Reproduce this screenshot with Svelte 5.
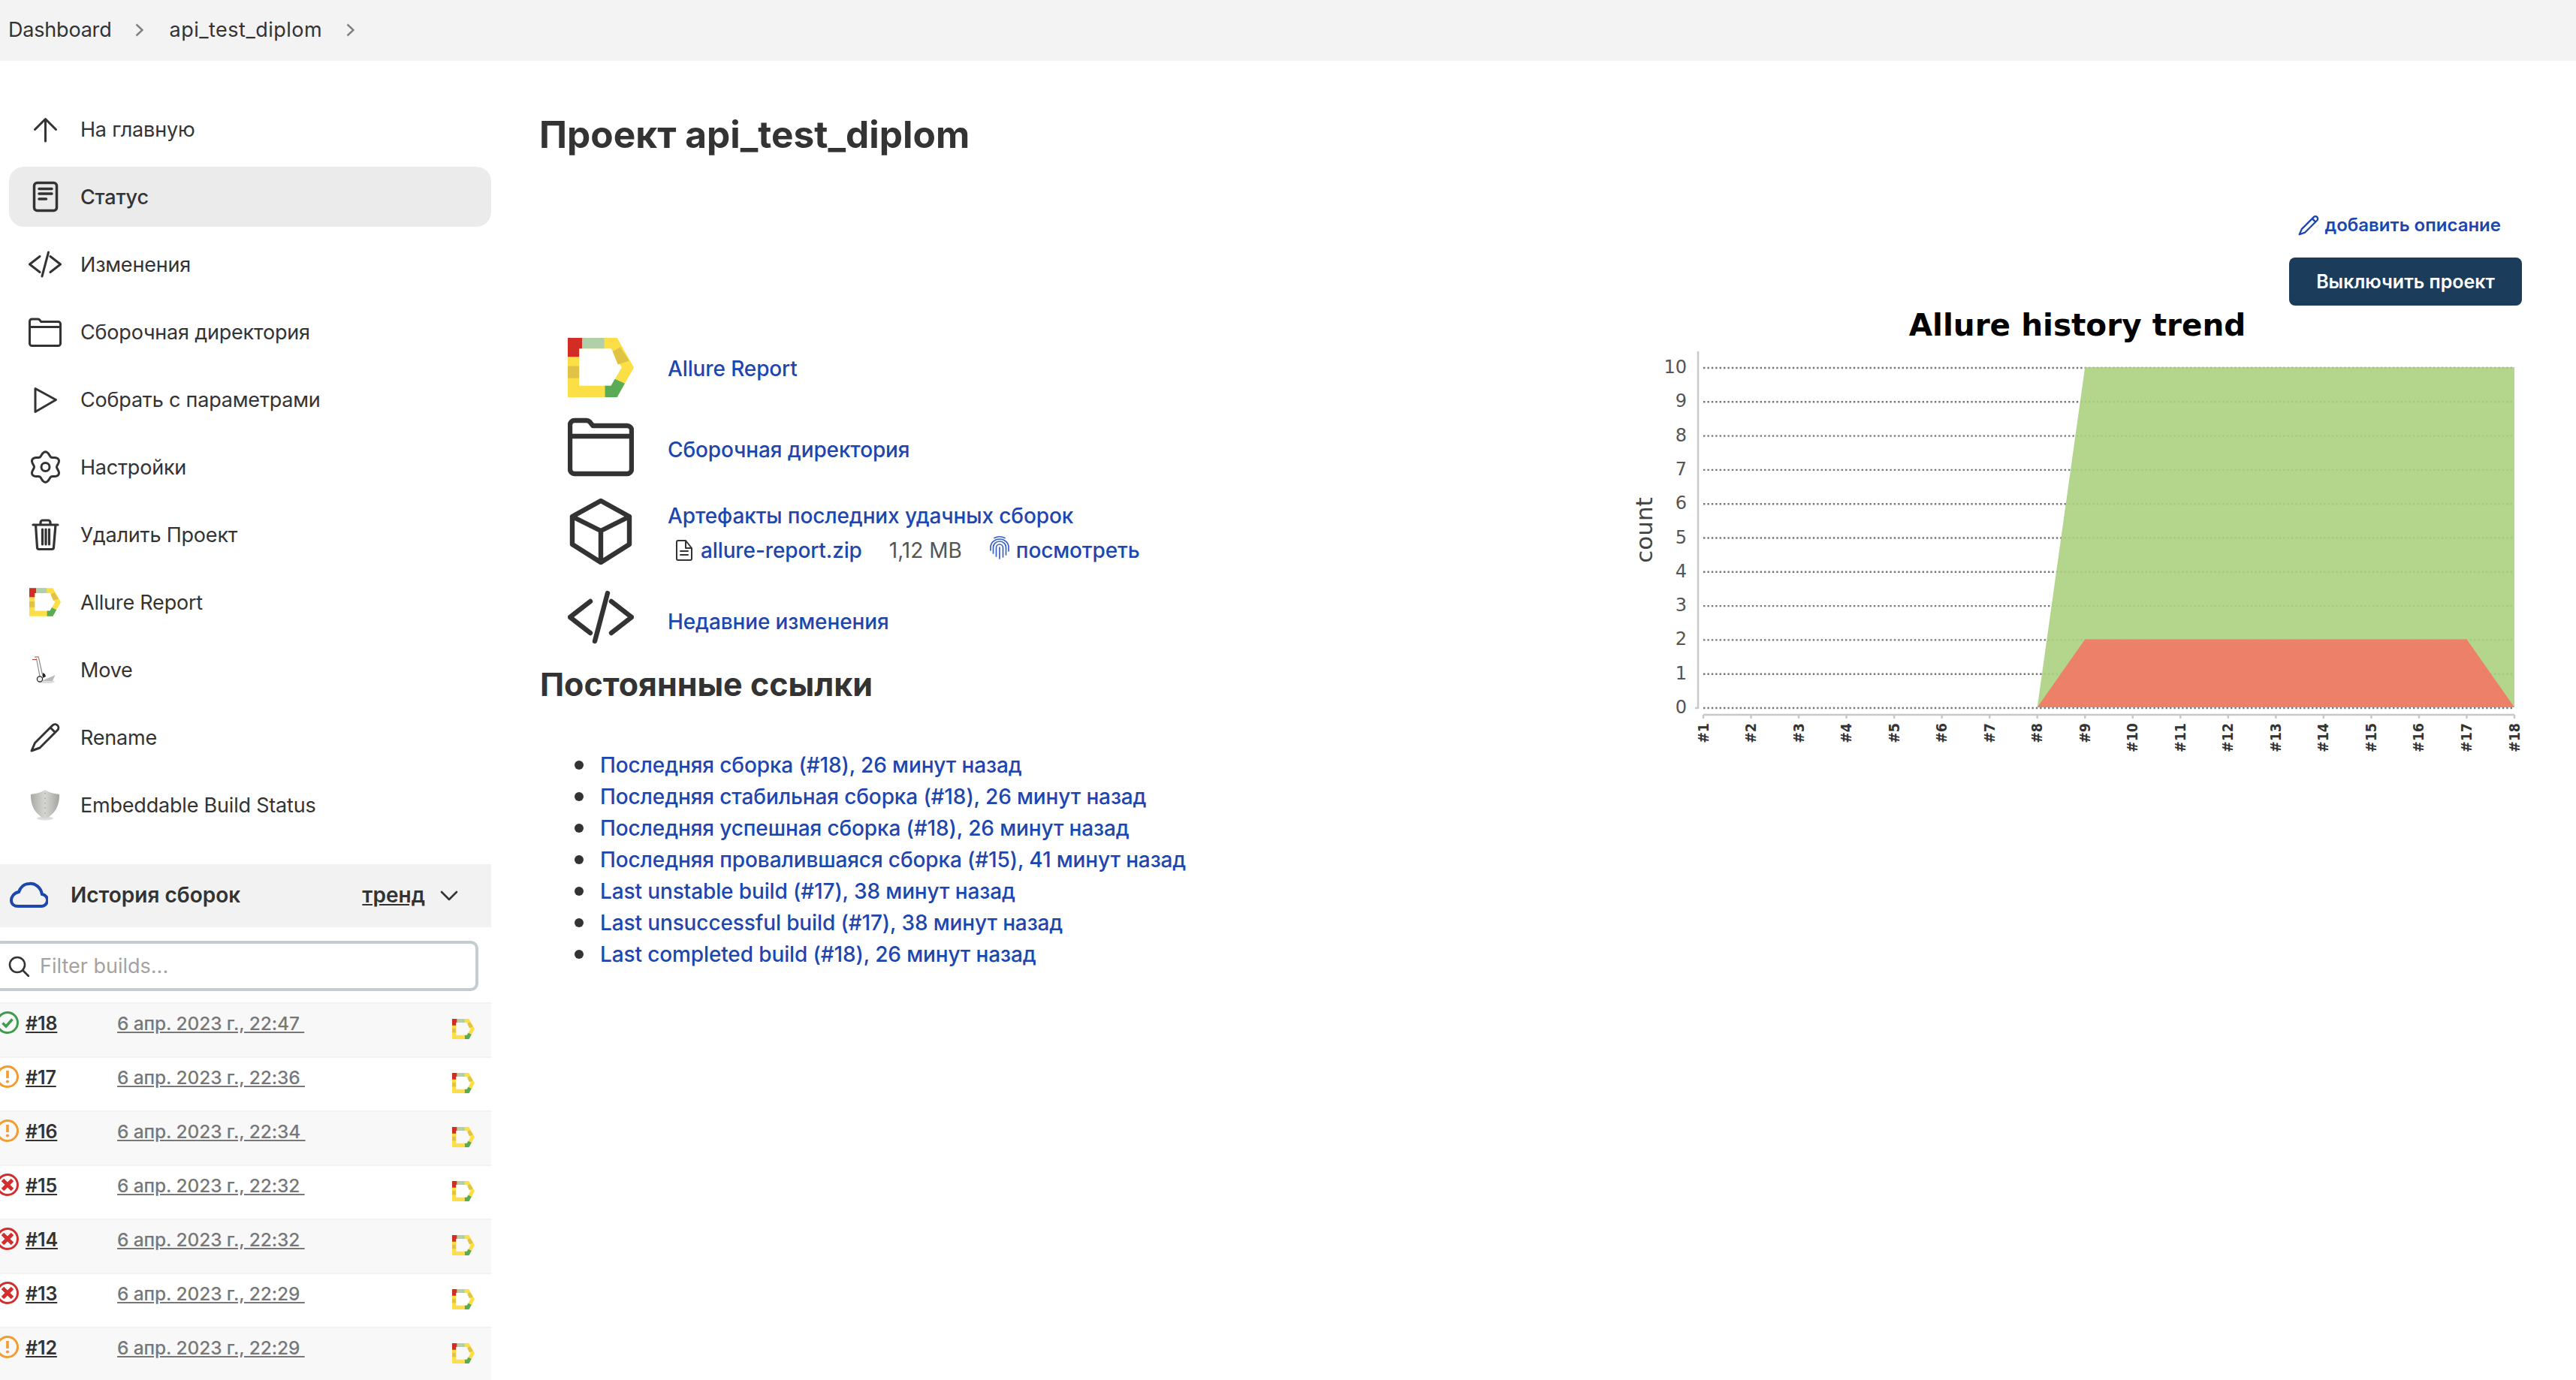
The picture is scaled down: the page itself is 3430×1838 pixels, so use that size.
<script>
	const navItems = [
		{ label: 'На главную', icon: 'up' },
		{ label: 'Статус', icon: 'status', active: true },
		{ label: 'Изменения', icon: 'code' },
		{ label: 'Сборочная директория', icon: 'folder' },
		{ label: 'Собрать с параметрами', icon: 'play' },
		{ label: 'Настройки', icon: 'gear' },
		{ label: 'Удалить Проект', icon: 'trash' },
		{ label: 'Allure Report', icon: 'allure' },
		{ label: 'Move', icon: 'move' },
		{ label: 'Rename', icon: 'pencil' },
		{ label: 'Embeddable Build Status', icon: 'shield' }
	];

	const builds = [
		{ id: 18, date: '6 апр. 2023 г., 22:47', status: 'ok' },
		{ id: 17, date: '6 апр. 2023 г., 22:36', status: 'warn' },
		{ id: 16, date: '6 апр. 2023 г., 22:34', status: 'warn' },
		{ id: 15, date: '6 апр. 2023 г., 22:32', status: 'fail' },
		{ id: 14, date: '6 апр. 2023 г., 22:32', status: 'fail' },
		{ id: 13, date: '6 апр. 2023 г., 22:29', status: 'fail' },
		{ id: 12, date: '6 апр. 2023 г., 22:29', status: 'warn' }
	];

	const permalinks = [
		'Последняя сборка (#18), 26 минут назад',
		'Последняя стабильная сборка (#18), 26 минут назад',
		'Последняя успешная сборка (#18), 26 минут назад',
		'Последняя провалившаяся сборка (#15), 41 минут назад',
		'Last unstable build (#17), 38 минут назад',
		'Last unsuccessful build (#17), 38 минут назад',
		'Last completed build (#18), 26 минут назад'
	];

	// chart geometry, in page pixels
	const xAt = (n) => 2268 + (n - 1) * (1080 / 17);
	const yAt = (v) => 942 - v * 45.3;
	const buildNums = Array.from({ length: 18 }, (_, i) => i + 1);
	const counts = Array.from({ length: 11 }, (_, i) => i);

	const greenArea = `${xAt(8)},${yAt(0)} ${xAt(9)},${yAt(10)} ${xAt(18)},${yAt(10)} ${xAt(18)},${yAt(0)}`;
	const redArea = `${xAt(8)},${yAt(0)} ${xAt(9)},${yAt(2)} ${xAt(17)},${yAt(2)} ${xAt(18)},${yAt(0)}`;

	// six lobed gear outline
	const gearPath = Array.from({ length: 96 }, (_, i) => {
		const a = (i / 96) * Math.PI * 2;
		const r = 17.6 - 2.6 * Math.cos(a * 6);
		return `${i ? 'L' : 'M'}${(22.5 + r * Math.cos(a)).toFixed(2)} ${(22 + r * Math.sin(a)).toFixed(2)}`;
	}).join(' ') + 'Z';
</script>

{#snippet allureLogo(w, h)}
	<svg width={w} height={h} viewBox="26 20 87 78">
		<path fill="#fcdf46" fill-rule="evenodd" d="M26 20H91L113 59L91 98H26ZM41 34V83H83L97 59L83 34Z" />
		<path fill="#d32c25" d="M26 20H45V34H41V45H26Z" />
		<path fill="#afd0a8" d="M45 20H74V34H45Z" />
		<path fill="#e0c344" d="M26 57H41V73H26Z" />
		<path fill="#e0c344" d="M95 32L107 50L92 55L85 38Z" />
		<path fill="#59ab56" d="M88 74L101 80L91 98H75V83H83Z" />
	</svg>
{/snippet}

{#snippet folderIcon(size, stroke)}
	<svg class="line" width={size} height={size} viewBox="0 0 44 44" stroke-width={stroke}>
		<path d="M1.5 8a3 3 0 0 1 3-3h8a3 3 0 0 1 2 .8l2.2 2.7h22.8a3 3 0 0 1 3 3v26a3 3 0 0 1-3 3h-35a3 3 0 0 1-3-3zM1.5 15.5h41" />
	</svg>
{/snippet}

{#snippet codeIcon(size, stroke)}
	<svg class="line" width={size} height={size} viewBox="0 0 44 44" stroke-width={stroke}>
		<path d="M15 11.5L1.5 22L15 32.5M29 11.5L42.5 22L29 32.5M26.5 6L18 38" />
	</svg>
{/snippet}

{#snippet navIcon(name)}
	{#if name === 'up'}
		<svg class="line" width="44" height="44" viewBox="0 0 44 44" stroke-width="3"><path d="M22.5 9V38M8.5 22.5L22.5 8.5L36.5 22.5" /></svg>
	{:else if name === 'status'}
		<svg class="line" width="44" height="44" viewBox="0 0 44 44" stroke-width="3.5">
			<rect x="7.5" y="3.5" width="30" height="37" rx="4" />
			<path d="M14 11.5H31M14 18H31M14 25H23.5" />
		</svg>
	{:else if name === 'code'}
		{@render codeIcon(44, 3)}
	{:else if name === 'folder'}
		{@render folderIcon(44, 3)}
	{:else if name === 'play'}
		<svg class="line" width="44" height="44" viewBox="0 0 44 44" stroke-width="3"><path d="M9 7.5L36.5 22.5L9 38.5Z" /></svg>
	{:else if name === 'gear'}
		<svg class="line" width="44" height="44" viewBox="0 0 44 44" stroke-width="3">
			<path d={gearPath} />
			<circle cx="22.5" cy="22" r="5.5" />
		</svg>
	{:else if name === 'trash'}
		<svg class="line" width="44" height="44" viewBox="0 0 44 44" stroke-width="3.2">
			<path d="M6 9H39M9.5 9L11.5 39a2.5 2.5 0 0 0 2.5 2.5h17a2.5 2.5 0 0 0 2.5-2.5L36 9M16 9V6a3 3 0 0 1 3-3h7a3 3 0 0 1 3 3V9M18.5 15V35M23 15V35M27.5 15V35" />
		</svg>
	{:else if name === 'allure'}
		<span class="nav-logo">{@render allureLogo(42, 38)}</span>
	{:else if name === 'move'}
		<svg width="44" height="44" viewBox="0 0 44 44">
			<ellipse cx="24" cy="38" rx="11" ry="2" fill="#ddd" />
			<path d="M10.5 7L15.5 33M13.5 6L19 31" stroke="#8d8d8d" stroke-width="1.2" fill="none" />
			<path d="M8 5H14M5 8.5H10.5" stroke="#b33" stroke-width="1.2" />
			<path d="M17 37L35.5 29L32 37Z" fill="#bbbcb8" />
			<path d="M19 26l3 2 1 3-4 2z" fill="#222" />
			<circle cx="15" cy="34.5" r="3.6" fill="#eee" stroke="#222" stroke-width="1.2" />
		</svg>
	{:else if name === 'pencil'}
		<svg class="line" width="44" height="44" viewBox="0 0 44 44" stroke-width="3">
			<path d="M4 40L8.5 29.5L32 6a4.5 4.5 0 0 1 6.5 6.5L15 36ZM29 9L35.5 15.5" />
		</svg>
	{:else if name === 'shield'}
		<svg width="44" height="44" viewBox="0 0 44 44">
			<defs>
				<linearGradient id="shieldFill" x1="0" x2="1" y1="0" y2="0">
					<stop offset="0" stop-color="#a9aaa5" />
					<stop offset="0.5" stop-color="#d6d7d2" />
					<stop offset="1" stop-color="#a3a49f" />
				</linearGradient>
			</defs>
			<ellipse cx="22" cy="40" rx="11" ry="2.5" fill="#ddd" />
			<path fill="url(#shieldFill)" d="M22 2C26 5 33 7 41 8C41.5 22 36 34 22 41C8 34 2.5 22 3 8C11 7 18 5 22 2Z" />
			<path d="M22 6V37" stroke="#999" stroke-width="1.2" stroke-dasharray="1.5 5" />
		</svg>
	{/if}
{/snippet}

{#snippet statusIcon(status)}
	<svg class="status" width="32" height="32" viewBox="0 0 32 32">
		{#if status === 'ok'}
			<circle cx="16" cy="16" r="13.5" stroke="#3f9c4c" stroke-width="3" fill="none" />
			<path d="M9.5 16.5L14 21L22.5 11.5" stroke="#3f9c4c" stroke-width="3.6" fill="none" />
		{:else if status === 'warn'}
			<circle cx="16" cy="16" r="13.5" stroke="#f39c2f" stroke-width="3" fill="none" />
			<path d="M16 8V18" stroke="#f39c2f" stroke-width="3.6" fill="none" />
			<circle cx="16" cy="22.5" r="2.1" fill="#f39c2f" />
		{:else}
			<circle cx="16" cy="16" r="13.5" stroke="#d12f2f" stroke-width="3" fill="none" />
			<path d="M9.5 9.5L22.5 22.5M22.5 9.5L9.5 22.5" stroke="#d12f2f" stroke-width="5" fill="none" />
		{/if}
	</svg>
{/snippet}

<div class="page">
	<header class="crumbs">
		<span>Dashboard</span>
		<svg class="crumb-arrow" width="11" height="18" viewBox="0 0 11 18"><path d="M1.5 1.5L9.5 9L1.5 16.5" /></svg>
		<span class="crumb-job">api_test_diplom</span>
		<svg class="crumb-arrow" width="11" height="18" viewBox="0 0 11 18"><path d="M1.5 1.5L9.5 9L1.5 16.5" /></svg>
	</header>

	<div class="body">
		<aside class="sidebar">
			<nav class="nav">
				{#each navItems as item}
					<div class="nav-item" class:active={item.active}>
						<span class="nav-icon">{@render navIcon(item.icon)}</span>
						<span>{item.label}</span>
					</div>
				{/each}
			</nav>

			<div class="history-head">
				<svg class="cloud" width="52" height="36" viewBox="0 0 52 36">
					<path d="M12 33H42a8 8 0 0 0 2-16C42 7 34 2 27 3C20 3 15 8 13 14C7 15 3 20 3 25C3 30 7 33 12 33Z" />
				</svg>
				<span class="history-title">История сборок</span>
				<span class="trend">тренд</span>
				<svg class="line chevron" width="24" height="14" viewBox="0 0 24 14" stroke-width="2.6"><path d="M2 2L12 12L22 2" /></svg>
			</div>

			<div class="filter">
				<svg class="line" width="28" height="28" viewBox="0 0 28 28" stroke-width="2.6"><circle cx="12" cy="12" r="10" /><path d="M19.5 19.5L27 27" /></svg>
				<input type="text" placeholder="Filter builds..." />
			</div>

			<div class="builds">
				{#each builds as build}
					<div class="build">
						{@render statusIcon(build.status)}
						<a class="build-id" href="#b">#{build.id}</a>
						<a class="build-date" href="#b">{build.date}&nbsp;</a>
						<span class="build-logo">{@render allureLogo(30, 27)}</span>
					</div>
				{/each}
			</div>
		</aside>

		<main class="main">
			<h1>Проект api_test_diplom</h1>

			<div class="actions">
				<a class="add-desc" href="#d">
					<svg width="30" height="30" viewBox="0 0 44 44" class="blue-line" stroke-width="3.4">
						<path d="M4 40L8.5 29.5L32 6a4.5 4.5 0 0 1 6.5 6.5L15 36ZM29 9L35.5 15.5" />
					</svg>
					добавить описание
				</a>
				<button class="disable-btn">Выключить проект</button>
			</div>

			<div class="content">
				<div class="left">
					<div class="task">
						<span class="task-icon">{@render allureLogo(88, 79)}</span>
						<a href="#t">Allure Report</a>
					</div>
					<div class="task">
						<span class="task-icon">{@render folderIcon(88, 3.2)}</span>
						<a href="#t">Сборочная директория</a>
					</div>
					<div class="task">
						<span class="task-icon">
							<svg class="line" width="88" height="88" viewBox="0 0 88 88" stroke-width="6.4">
								<path d="M44 3L82 24V61L44 85L6 61V24ZM6 24L44 43L82 24M44 43V85" />
							</svg>
						</span>
						<div class="artifacts">
							<a href="#t">Артефакты последних удачных сборок</a>
							<div class="artifact-row">
								<svg class="line" width="24" height="28" viewBox="0 0 24 28" stroke-width="2">
									<path d="M2 3a2 2 0 0 1 2-2H14L22 11V25a2 2 0 0 1-2 2H4a2 2 0 0 1-2-2ZM14 1V11H22M7 15H17M7 20H17" />
								</svg>
								<a class="zip" href="#t">allure-report.zip</a>
								<span class="size">1,12 MB</span>
								<svg class="print" width="28" height="32" viewBox="0 0 28 32">
									<path d="M7 3.5Q14 0 21 3.5M2 20V16A12 11 0 0 1 26 16V21M5.5 24V16A8.5 8 0 0 1 22.5 16V26M9.5 28V16.5A4.5 4.5 0 0 1 18.5 16.5V29M14 16V31" />
								</svg>
								<a href="#t">посмотреть</a>
							</div>
						</div>
					</div>
					<div class="task">
						<span class="task-icon">{@render codeIcon(88, 3.2)}</span>
						<a href="#t">Недавние изменения</a>
					</div>

					<h2>Постоянные ссылки</h2>
					<ul class="permalinks">
						{#each permalinks as link}
							<li><a href="#p">{link}</a></li>
						{/each}
					</ul>
				</div>

				<svg class="chart" width="1188" height="600" viewBox="2170 410 1188 600">
					<text class="chart-title" x="2766" y="447" text-anchor="middle">Allure history trend</text>

					{#each counts as c}
						<line class="grid" x1="2268" x2="3348" y1={yAt(c) + 1} y2={yAt(c) + 1} />
						<text class="y-label" x="2246" y={yAt(c) + 8} text-anchor="end">{c}</text>
					{/each}

					<polygon points={greenArea} fill="#acd07f" fill-opacity="0.9" />
					<polygon points={redArea} fill="#ec8068" />

					<line class="axis" x1="2261" x2="2261" y1="468" y2="944" />
					<line class="axis" x1="2257" x2="2261" y1="943" y2="943" />
					<line class="axis" x1="2268" x2="3348" y1="952" y2="952" />

					{#each buildNums as n}
						<line class="axis" x1={xAt(n)} x2={xAt(n)} y1="952" y2="957" />
						<text class="x-label" text-anchor="end" transform="translate({xAt(n) + 6.5} 963) rotate(-90) scale(1 1.12)">#{n}</text>
					{/each}

					<text class="count" text-anchor="middle" transform="translate(2200 706) rotate(-90)">count</text>
				</svg>
			</div>
		</main>
	</div>
</div>

<style>
	:global(body) {
		margin: 0;
		background: #fff;
	}

	.page {
		width: 3430px;
		height: 1838px;
		overflow: hidden;
		font-family: Inter, 'Noto Sans', sans-serif;
		font-size: 28px;
		color: #333;
	}

	a {
		color: #1d46ae;
		font-weight: 500;
		text-decoration: none;
		letter-spacing: -0.12px;
	}

	.line {
		fill: none;
		stroke: #333;
		stroke-linecap: round;
		stroke-linejoin: round;
		flex: none;
	}

	.crumbs {
		height: 81px;
		background: #f3f3f3;
		display: flex;
		align-items: center;
		padding: 0 0 2px 11px;
		box-sizing: border-box;
		font-size: 27px;
		letter-spacing: -0.2px;
	}

	.crumb-job {
		letter-spacing: 0.5px;
	}

	.crumb-arrow {
		fill: none;
		stroke: #808080;
		stroke-width: 2.4;
		margin: 0 34px 0 32px;
	}

	.body {
		display: flex;
	}

	.sidebar {
		width: 654px;
		flex: none;
		overflow: hidden;
	}

	.nav {
		padding: 51px 0 39px 12px;
		display: flex;
		flex-direction: column;
		gap: 10px;
		font-size: 27px;
		letter-spacing: -0.2px;
	}

	.nav-item {
		height: 80px;
		display: flex;
		align-items: center;
		gap: 25px;
		padding-left: 26px;
		border-radius: 20px;
	}

	.nav-item.active {
		background: #ebebeb;
		font-weight: 550;
	}

	.nav-icon {
		width: 44px;
		height: 44px;
		display: flex;
		align-items: center;
		justify-content: center;
		flex: none;
	}

	.nav-logo {
		display: flex;
	}

	.history-head {
		height: 84px;
		background: #f2f2f2;
		display: flex;
		align-items: center;
		padding: 0 0 2px 12px;
		box-sizing: border-box;
	}

	.cloud {
		fill: none;
		stroke: #1d46ae;
		stroke-width: 4;
		margin-right: 30px;
	}

	.history-title {
		font-weight: 600;
	}

	.trend {
		margin-left: auto;
		font-weight: 600;
		text-decoration: underline;
	}

	.chevron {
		margin: 2px 44px 0 20px;
	}

	.filter {
		width: 645px;
		height: 67px;
		box-sizing: border-box;
		margin: 18px 0 15px -8px;
		border: 4px solid #c3ccd1;
		border-radius: 10px;
		display: flex;
		align-items: center;
		gap: 14px;
		padding-left: 15px;
	}

	.filter input {
		border: 0;
		outline: 0;
		background: transparent;
		flex: 1;
		min-width: 0;
		font: 27px Inter, sans-serif;
		padding: 0;
		color: #333;
	}

	.filter input::placeholder {
		color: #a3a3a3;
	}

	.build {
		height: 72px;
		box-sizing: border-box;
		border-top: 2px solid #f2f2f2;
		display: flex;
		align-items: flex-start;
		padding-top: 10px;
	}

	.build:nth-child(odd) {
		background: #f8f8f8;
	}

	.status {
		margin: -1px 8px 0 -6px;
		flex: none;
	}

	.build-id {
		width: 122px;
		flex: none;
		color: #333;
		font-size: 25px;
		font-weight: 600;
		line-height: 32px;
		text-decoration: underline;
	}

	.build-date {
		color: #777;
		font-size: 24.5px;
		font-weight: 500;
		line-height: 32px;
		text-decoration: underline;
	}

	.build-logo {
		margin: 10px 0 0 auto;
		padding-right: 22px;
		display: flex;
	}

	.main {
		flex: 1;
		padding: 0 72px 0 64px;
		min-width: 0;
	}

	h1 {
		margin: 68px 0 0;
		font-size: 49.6px;
		line-height: 60px;
		font-weight: 650;
		color: #333;
	}

	.actions {
		display: flex;
		flex-direction: column;
		align-items: flex-end;
		margin-top: 74px;
	}

	.add-desc {
		display: flex;
		align-items: center;
		gap: 6px;
		font-size: 24px;
		font-weight: 600;
		line-height: 34px;
		margin-right: 28px;
		letter-spacing: 0;
	}

	.blue-line {
		fill: none;
		stroke: #1d46ae;
		stroke-linejoin: round;
	}

	.disable-btn {
		margin-top: 26px;
		height: 64px;
		width: 310px;
		border: 0;
		border-radius: 8px;
		background: #1b3c5a;
		color: #fff;
		font: 600 25px Inter, sans-serif;
		padding: 0;
	}

	.content {
		display: flex;
		justify-content: space-between;
		margin-top: 3px;
	}

	.left {
		padding-top: 35px;
	}

	.task {
		display: flex;
		align-items: center;
		gap: 45px;
		padding-left: 38px;
		margin-bottom: 26px;
	}

	.task:first-child {
		margin-bottom: 17px;
	}

	.task > a {
		padding-top: 9px;
	}

	.task:first-child > a {
		padding-top: 4px;
	}

	.task:nth-child(4) > a {
		padding-top: 11px;
	}

	.task-icon {
		width: 88px;
		height: 88px;
		display: flex;
		align-items: center;
		justify-content: center;
		flex: none;
	}

	.artifacts {
		display: flex;
		flex-direction: column;
		gap: 12px;
		padding-top: 4px;
	}

	.artifact-row {
		display: flex;
		align-items: center;
		padding-left: 10px;
	}

	.zip {
		margin-left: 10px;
	}

	.size {
		margin: 0 36px 0 36px;
		color: #555;
	}

	.print {
		fill: none;
		stroke: #3a62c2;
		stroke-width: 1.7;
		stroke-linecap: round;
		margin: -8px 8px 0 0;
	}

	h2 {
		margin: -6px 0 62px 1px;
		font-size: 43px;
		line-height: 50px;
		font-weight: 650;
	}

	.permalinks {
		margin: 0;
		padding: 0 0 0 47px;
		list-style: none;
		line-height: 42px;
	}

	.permalinks li {
		display: flex;
		align-items: center;
		gap: 22px;
	}

	.permalinks li::before {
		content: '';
		width: 12px;
		height: 12px;
		border-radius: 50%;
		background: #333;
		flex: none;
	}

	.chart {
		flex: none;
		display: block;
	}

	.chart text {
		font-family: 'DejaVu Sans', sans-serif;
	}

	.chart .chart-title {
		font-size: 40.5px;
		font-weight: 700;
		fill: #000;
	}

	.grid {
		stroke: #777;
		stroke-width: 2.4;
		stroke-dasharray: 2.4 3;
	}

	.axis {
		stroke: #c8c8c8;
		stroke-width: 2.5;
	}

	.chart .y-label {
		font-size: 24px;
		fill: #555;
	}

	.chart .x-label {
		font-size: 17.5px;
		font-weight: 700;
		fill: #333;
	}

	.chart .count {
		font-size: 31px;
		fill: #444;
	}
</style>
